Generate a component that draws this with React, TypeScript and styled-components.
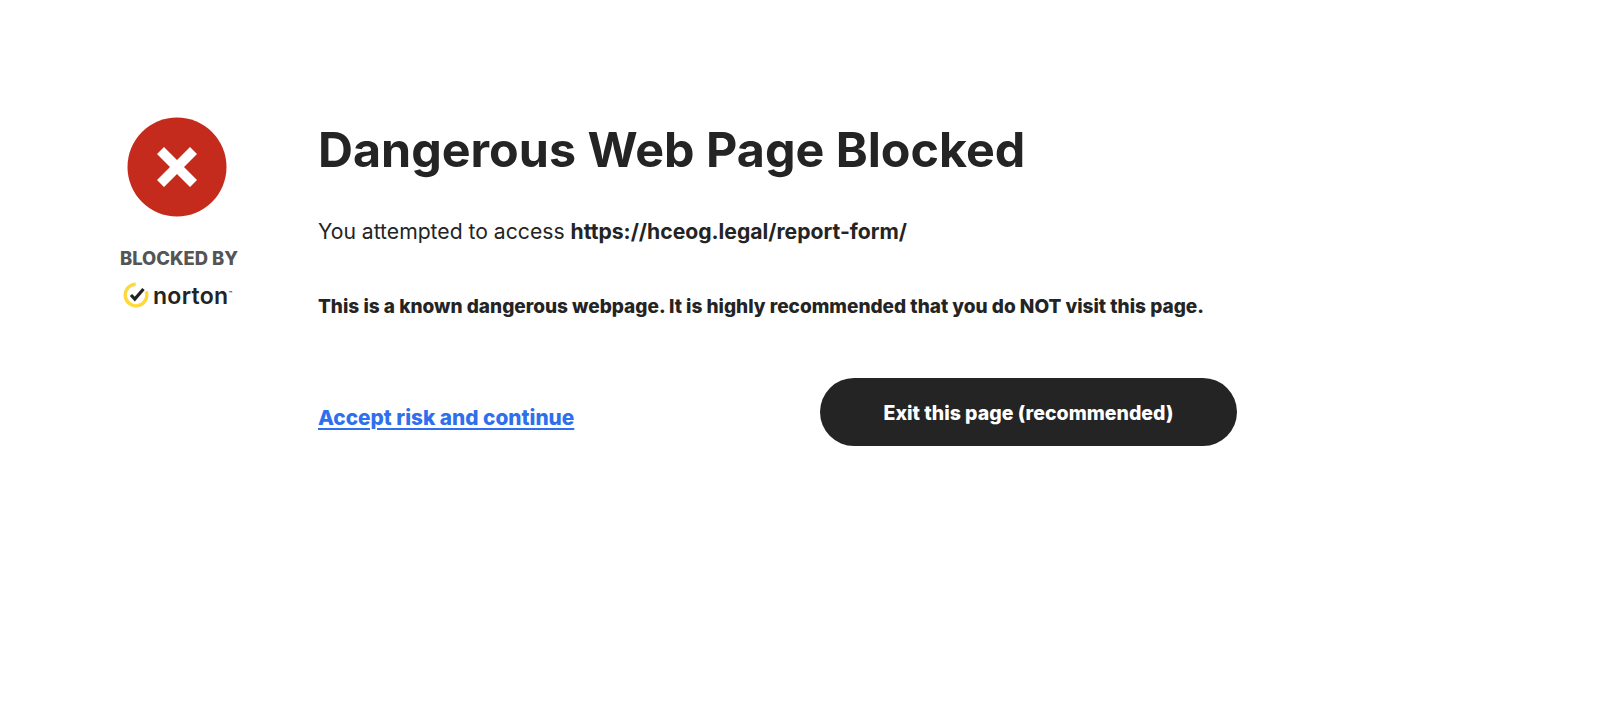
import React from "react";
import styled, { createGlobalStyle } from "styled-components";

const GlobalStyle = createGlobalStyle`
  html, body {
    margin: 0;
    padding: 0;
    background: #fff;
    font-family: Inter, "Liberation Sans", sans-serif;
  }
`;

export default function App() {
  return (
    <>
      <GlobalStyle />
      <Page>
        <Side>
          <BlockIcon width="100" height="100" viewBox="0 0 100 100">
            <circle cx="50" cy="50" r="49.5" fill="#c42b1c" />
            <path d="M30 37 L37 30 L50 43 L63 30 L70 37 L57 50 L70 63 L63 70 L50 57 L37 70 L30 63 L43 50 Z" fill="#fff" />
          </BlockIcon>
          <BlockedBy>BLOCKED BY</BlockedBy>
          <Norton>
            <svg width="26" height="26" viewBox="0 0 26 26">
              <circle cx="13" cy="13" r="10.8" fill="none" stroke="#ffd93b" strokeWidth="3.4" strokeDasharray="54 14" transform="rotate(-20 13 13)" />
              <path d="M8 13 L11.8 17 L20.5 7" fill="none" stroke="#222" strokeWidth="3.2" />
            </svg>
            <NortonName>norton<Tm>™</Tm></NortonName>
          </Norton>
        </Side>
        <Main>
          <Title>Dangerous Web Page Blocked</Title>
          <Attempt>You attempted to access <strong>https://hceog.legal/report-form/</strong></Attempt>
          <Warning>This is a known dangerous webpage. It is highly recommended that you do NOT visit this page.</Warning>
          <Actions>
            <AcceptLink href="#">Accept risk and continue</AcceptLink>
            <ExitButton type="button">Exit this page (recommended)</ExitButton>
          </Actions>
        </Main>
      </Page>
    </>
  );
}

const Page = styled.div`
  display: flex;
  height: 720px;
  box-sizing: border-box;
  padding: 117px 0 0 120px;
  color: #242424;
  overflow: hidden;
`;

const Side = styled.div`
  width: 198px;
  display: flex;
  flex-direction: column;
`;

const BlockIcon = styled.svg`
  margin-left: 7px;
`;

const BlockedBy = styled.div`
  margin-top: 28px;
  font-size: 18.4px;
  line-height: 26px;
  font-weight: 800;
  color: #555;
  white-space: nowrap;
`;

const Norton = styled.div`
  display: flex;
  align-items: center;
  gap: 4px;
  margin: 8px 0 0 3px;
`;

const NortonName = styled.span`
  font-size: 23px;
  line-height: 30px;
  font-weight: 600;
  letter-spacing: 0.3px;
  color: #242424;
  white-space: nowrap;
`;

const Tm = styled.span`
  font-size: 6px;
  vertical-align: 8px;
  letter-spacing: 0;
`;

const Main = styled.div`
  width: 920px;
  margin-top: 3px;
`;

const Title = styled.h1`
  margin: 0;
  font-size: 48.4px;
  line-height: 60px;
  font-weight: 700;
`;

const Attempt = styled.p`
  margin: 37px 0 0;
  font-size: 21.15px;
  line-height: 30px;
  strong { font-weight: 700; }
`;

const Warning = styled.p`
  margin: 46px 0 0;
  font-size: 19.03px;
  line-height: 28px;
  font-weight: 800;
`;

const Actions = styled.div`
  display: flex;
  align-items: center;
  margin-top: 57px;
`;

const AcceptLink = styled.a`
  width: 502px;
  font-size: 20.8px;
  font-weight: 800;
  line-height: 28px;
  color: #2f6fed;
  text-decoration: underline;
  text-decoration-thickness: 2px;
  text-underline-offset: 3px;
  position: relative;
  top: 6px;
`;

const ExitButton = styled.button`
  width: 417px;
  height: 68px;
  padding: 1px 0 0;
  border: none;
  border-radius: 34px;
  background: #242424;
  color: #fff;
  font-family: inherit;
  font-size: 19.5px;
  font-weight: 800;
`;
